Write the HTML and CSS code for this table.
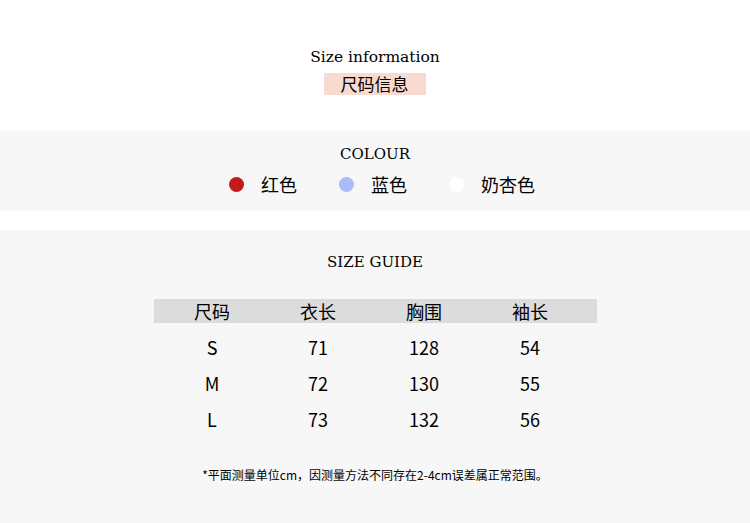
FILE: index.html
```html
<!DOCTYPE html>
<html lang="zh">
<head>
<meta charset="utf-8">
<link rel="stylesheet" href="styles.css">
</head>
<body>
<section class="intro">
  <div class="en-title">Size information</div>
  <div class="cn-tag">尺码信息</div>
</section>
<section class="colour">
  <div class="serif-title">COLOUR</div>
  <div class="swatches">
    <div class="swatch"><span class="dot dot-red"></span><span class="name">红色</span></div>
    <div class="swatch"><span class="dot dot-blue"></span><span class="name">蓝色</span></div>
    <div class="swatch"><span class="dot dot-white"></span><span class="name">奶杏色</span></div>
  </div>
</section>
<section class="guide">
  <div class="serif-title">SIZE GUIDE</div>
  <div class="table">
    <div class="row head"><span>尺码</span><span>衣长</span><span>胸围</span><span>袖长</span></div>
    <div class="row"><span>S</span><span>71</span><span>128</span><span>54</span></div>
    <div class="row"><span>M</span><span>72</span><span>130</span><span>55</span></div>
    <div class="row"><span>L</span><span>73</span><span>132</span><span>56</span></div>
  </div>
  <div class="note">*平面测量单位cm，因测量方法不同存在2-4cm误差属正常范围。</div>
</section>
</body>
</html>
```
FILE: styles.css
```css
html, body {
  margin: 0;
  padding: 0;
  background: #ffffff;
  color: #000;
  font-family: "Noto Sans CJK SC", "Noto Sans", sans-serif;
}
body {
  width: 750px;
  height: 523px;
  overflow: hidden;
}
.intro {
  height: 131px;
  display: flex;
  flex-direction: column;
  align-items: center;
  box-sizing: border-box;
  padding-top: 47px;
}
.en-title {
  font-family: "DejaVu Serif", serif;
  font-size: 15.5px;
  line-height: 20px;
}
.cn-tag {
  margin-top: 6px;
  margin-left: -1px;
  width: 102px;
  height: 22px;
  background: #f8dbd0;
  font-size: 17px;
  line-height: 22px;
  text-align: center;
}
.colour {
  height: 80px;
  background: #f7f7f7;
  box-sizing: border-box;
  padding-top: 13px;
  display: flex;
  flex-direction: column;
  align-items: center;
}
.serif-title {
  font-family: "DejaVu Serif", serif;
  font-size: 15px;
  line-height: 20px;
}
.swatches {
  margin-top: 9px;
  align-self: flex-start;
  margin-left: 229px;
  display: flex;
}
.swatch {
  display: flex;
  align-items: center;
  height: 22px;
  width: 110px;
}
.dot {
  width: 15px;
  height: 15px;
  border-radius: 50%;
  margin-right: 17px;
  flex: none;
}
.dot-red { background: #c21b1e; }
.dot-blue { background: #a9bbf8; }
.dot-white { background: #ffffff; }
.name {
  font-size: 18px;
  line-height: 22px;
}
.guide {
  margin-top: 19px;
  height: 293px;
  background: #f7f7f7;
  box-sizing: border-box;
  padding-top: 22px;
  display: flex;
  flex-direction: column;
  align-items: center;
}
.table {
  margin-top: 27px;
  width: 443px;
  margin-left: 1px;
}
.row {
  display: grid;
  grid-template-columns: repeat(4, 106px);
  padding-left: 5px;
  height: 36px;
  align-items: center;
  font-size: 18px;
}
.row span {
  text-align: center;
}
.row.head {
  height: 24px;
  line-height: 22px;
  background: #dcdcdc;
  margin-bottom: 6px;
}
.note {
  margin-top: 30px;
  font-size: 12px;
  line-height: 16px;
}
```
